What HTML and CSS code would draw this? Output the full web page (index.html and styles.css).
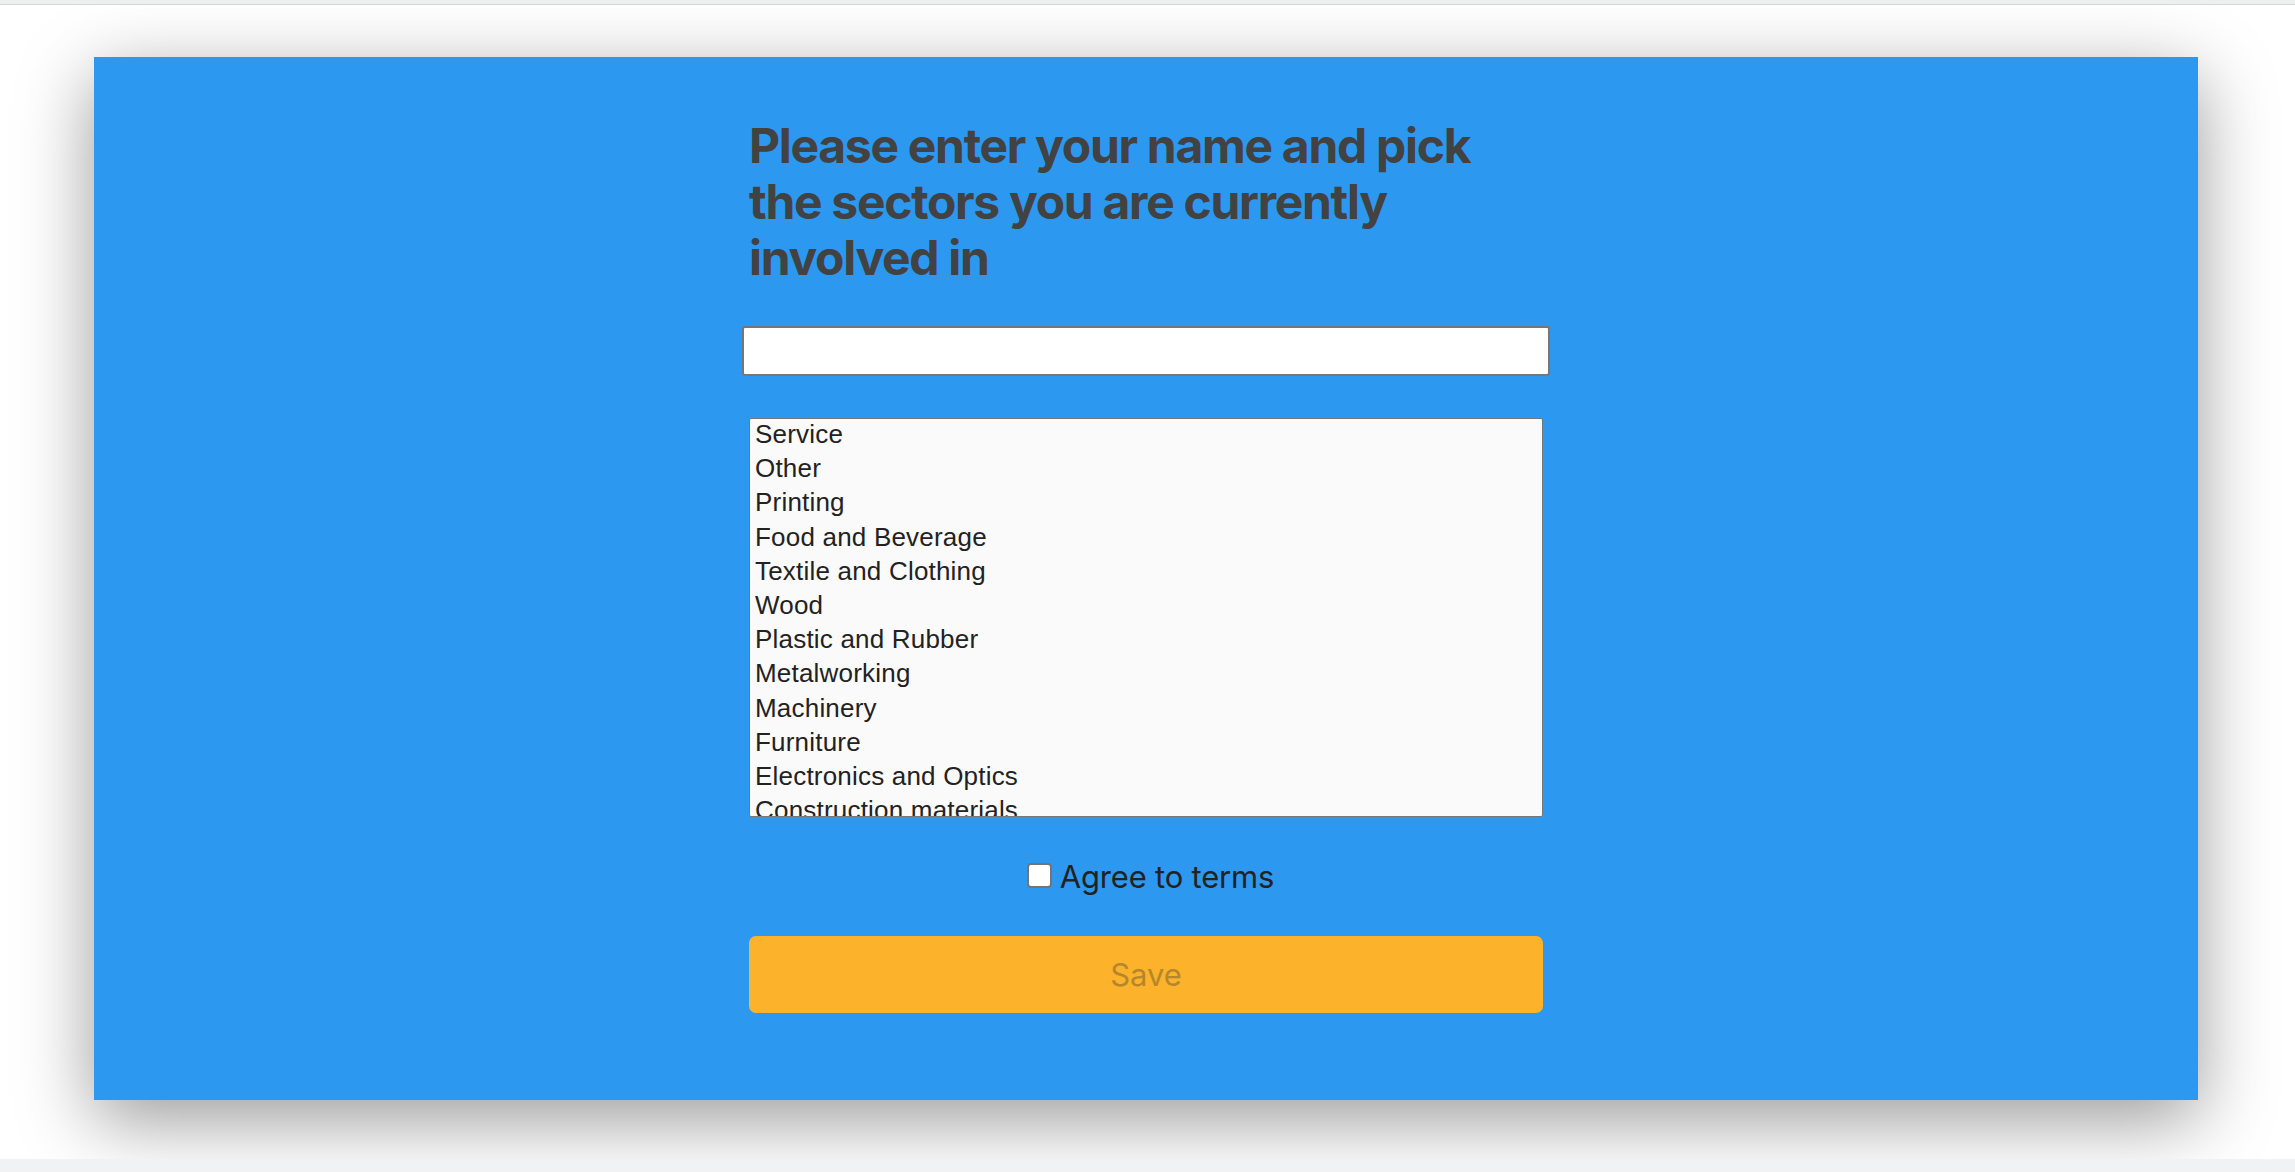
FILE: index.html
```html
<!DOCTYPE html>
<html lang="en">
<head>
<meta charset="utf-8">
<title>Sectors</title>
<link rel="stylesheet" href="styles.css">
</head>
<body>
<div class="topbar"></div>
<main class="page">
  <section class="card">
    <form class="form">
      <h1 class="title">Please enter your name and pick the sectors you are currently involved in</h1>
      <input class="name-input" type="text" aria-label="Name">
      <select class="sectors" multiple size="12" aria-label="Sectors">
        <option>Service</option>
        <option>Other</option>
        <option>Printing</option>
        <option>Food and Beverage</option>
        <option>Textile and Clothing</option>
        <option>Wood</option>
        <option>Plastic and Rubber</option>
        <option>Metalworking</option>
        <option>Machinery</option>
        <option>Furniture</option>
        <option>Electronics and Optics</option>
        <option>Construction materials</option>
        <option>Manufacturing</option>
        <option>Information Technology</option>
        <option>Tourism</option>
        <option>Transport and Logistics</option>
      </select>
      <label class="terms"><input class="terms-box" type="checkbox"><span>Agree to terms</span></label>
      <button class="save" type="button" disabled>Save</button>
    </form>
  </section>
</main>
<div class="bottombar"></div>
</body>
</html>
```
FILE: styles.css
```css
html, body {
  margin: 0;
  padding: 0;
  background: #ffffff;
}
body {
  font-family: Inter, "Noto Sans", sans-serif;
  height: 1172px;
  overflow: hidden;
  display: flex;
  flex-direction: column;
}
.topbar {
  height: 4px;
  background: #eef0ef;
  border-bottom: 1px solid #d6d7d7;
  flex: none;
}
.page {
  flex: none;
  padding: 52px 97px 59px 94px;
}
.card {
  background: #2d98ef;
  height: 1043px;
  box-sizing: border-box;
  padding-top: 61px;
  box-shadow: 0 20px 70px rgba(0, 0, 0, 0.4);
}
.form {
  width: 794px;
  margin: 0 auto;
  display: flex;
  flex-direction: column;
}
.title {
  margin: 0;
  font-family: Inter, sans-serif;
  font-weight: 700;
  font-size: 48px;
  line-height: 56px;
  letter-spacing: -1.3px;
  color: #424242;
}
.name-input {
  margin: 40px -7px 0 -7px;
  height: 50px;
  box-sizing: border-box;
  border: 2px solid #767676;
  border-radius: 3px;
  background: #fff;
  font-size: 22px;
  padding: 0 8px;
}
.sectors {
  margin-top: 42px;
  height: 399px;
  box-sizing: border-box;
  border: 1px solid #767676;
  border-radius: 2px;
  background: #fafafa;
  padding: 0;
  font-family: "Liberation Sans", Arial, sans-serif;
  font-size: 26px;
  letter-spacing: 0.2px;
  color: #222;
  overflow: hidden;
  scrollbar-width: none;
  outline: none;
}
.sectors option {
  padding: 0 4px 3px 5px;
  color: #222;
}
.terms {
  margin-top: 41px;
  height: 36px;
  padding-left: 9px;
  display: flex;
  align-items: center;
  justify-content: center;
  font-family: Inter, sans-serif;
  font-size: 31px;
  color: #222;
  letter-spacing: -0.2px;
}
.terms-box {
  appearance: none;
  -webkit-appearance: none;
  box-sizing: border-box;
  width: 25px;
  height: 25px;
  margin: 0 8px 2px 0;
  border: 2px solid #747474;
  border-radius: 4px;
  background: #fff;
  flex: none;
}
.save {
  margin-top: 42px;
  height: 77px;
  border: none;
  border-radius: 7px;
  background: #fdb22b;
  color: #b5872c;
  font-family: Inter, sans-serif;
  font-size: 31px;
  padding: 0;
}
.bottombar {
  flex: 1;
  background: #f1f2f4;
}
```
